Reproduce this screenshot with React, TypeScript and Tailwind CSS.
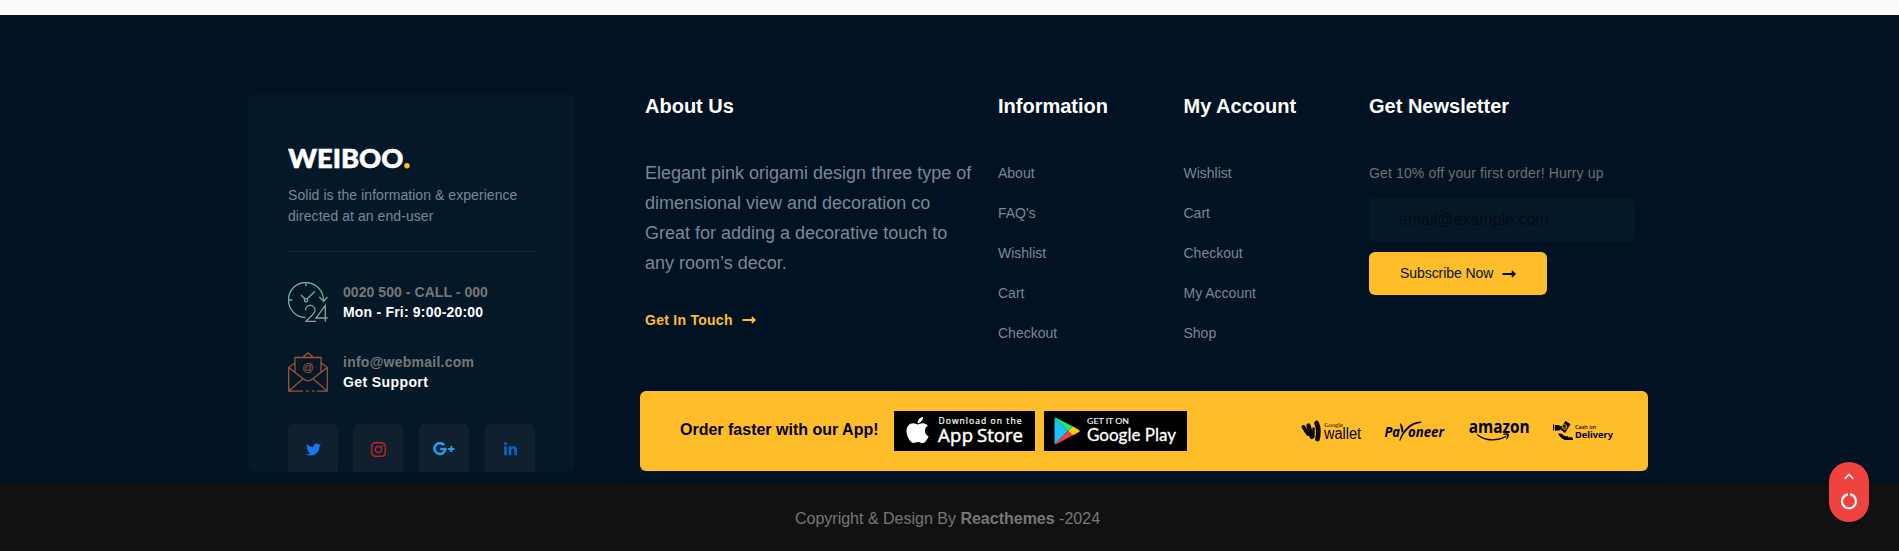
import React from "react";
import { FaTwitter, FaInstagram, FaLinkedinIn, FaApple } from "react-icons/fa";

const information = ["About", "FAQ's", "Wishlist", "Cart", "Checkout"];
const account = ["Wishlist", "Cart", "Checkout", "My Account", "Shop"];

function Arrow() {
  return (
    <svg width="14" height="8" viewBox="0 0 14 8" fill="currentColor" aria-hidden="true">
      <path d="M1 3h8.700V1.200c0-.7.6-.9 1-.5l2.900 2.800c.3.3.3.7 0 1l-2.900 2.800c-.4.4-1 .2-1-.5V5H1C.5 5 .3 4.800.3 4.500V3.500C.3 3.200.500 3 1 3z" />
    </svg>
  );
}

function Brand() {
  return (
    <svg width="124" height="26" viewBox="0 0 124 26" className="block overflow-visible" aria-label="WEIBOO.">
      <text x="0.300" y="22.800" textLength="115" lengthAdjust="spacingAndGlyphs" fill="#fff" stroke="#fff" strokeWidth=".6" fontFamily="Lato, sans-serif" fontWeight="900" fontSize="26.500">WEIBOO</text>
      <circle cx="119" cy="20.700" r="2.700" fill="#ffbe29" />
    </svg>
  );
}

function ClockIcon() {
  return (
    <svg width="40" height="40" viewBox="0 0 40 40" fill="none" stroke="#77ac9c" strokeWidth="1.300" className="shrink-0">
      <path d="M17.500 35.500A17.500 17.500 0 1 1 35.400 18.500" />
      <path d="M31.300 15l4.200 4.200 4-4.200M18 .8v3.500M.8 18h3.500M13 13l4 4M19.300 16.800l7.700-7.600" />
      <circle cx="18" cy="18.300" r="1.600" />
      <path d="M17.500 28.300c0-6.500 9.500-6.500 9.500 0 0 4-6 7-9 11h10M39.800 36H28l9.300-12.600v16.300" />
    </svg>
  );
}

function MailIcon() {
  return (
    <svg width="40" height="40" viewBox="0 0 40 40" fill="none" stroke="#9b5236" strokeWidth="1.300" className="shrink-0">
      <path d="M7 20.300V5.500h26v14.800M14.500 5.500L20 .9l5.500 4.600M7 10.800L.7 15.500v23.700H15M33 10.800l6.300 4.700v23.700H29M18 39.200h2.700M24 39.200h2.700M.7 15.500l14.800 11.600c3 2.300 6 2.300 9 0l14.800-11.600M.9 39l14-12.300M39.100 39l-14-12.300" />
      <text x="20" y="18.800" textAnchor="middle" fontSize="11.500" fontFamily="Liberation Sans, sans-serif" fill="#9b5236" strokeWidth=".15">@</text>
    </svg>
  );
}

function GooglePlusIcon() {
  return (
    <svg width="22" height="14" viewBox="0 0 22 14" fill="none" stroke="#1da1f2" strokeWidth="2.600">
      <path d="M11.100 3.100A5.400 5.400 0 1 0 12.300 7H7.200" />
      <path d="M15.200 7h6.200M18.300 3.900v6.200" strokeWidth="2" />
    </svg>
  );
}

function AppStoreBadge() {
  return (
    <a href="#" className="flex h-10 w-[141px] bg-black pl-3 text-white">
      <FaApple className="mt-1 h-[30px] w-[23px] shrink-0" />
      <svg width="102" height="40" viewBox="0 0 102 40" fill="#fff" stroke="#fff" fontFamily="Open Sans, sans-serif">
        <text x="9.500" y="12.800" fontSize="8.500" textLength="83" strokeWidth=".2">Download on the</text>
        <text x="9" y="31.300" fontSize="18.500" textLength="35" strokeWidth=".5">App</text>
        <text x="48" y="31.300" fontSize="18.500" textLength="46" strokeWidth=".5">Store</text>
      </svg>
    </a>
  );
}

function GooglePlayBadge() {
  return (
    <a href="#" className="block h-10 w-[143px] bg-black">
      <svg width="143" height="40" viewBox="0 0 143 40">
        <path d="M10.500 7v26L24 20z" fill="#16c5f5" />
        <path d="M10.500 7L24 20l5-4.600L12 6.800z" fill="#20e878" />
        <path d="M10.500 33L24 20l5 4.300L12 33.200z" fill="#f53d4c" />
        <path d="M24 20l5-4.600 6 3.500c1 .6 1 1.500 0 2.100l-6 3.300z" fill="#ffd000" />
        <g fill="#fff" stroke="#fff" fontFamily="Lato, sans-serif" fontWeight="400">
          <text x="43" y="12.800" fontSize="8" textLength="42" lengthAdjust="spacingAndGlyphs" strokeWidth=".1">GET IT ON</text>
          <text x="43" y="30" fontSize="17" textLength="89" lengthAdjust="spacingAndGlyphs" strokeWidth=".3">Google Play</text>
        </g>
      </svg>
    </a>
  );
}

function GoogleWallet() {
  return (
    <svg width="60" height="22" viewBox="0 0 60 22" className="overflow-visible">
      <g stroke="#0b0a08" strokeLinecap="round" fill="none">
        <path d="M2.500 7l4.500 7" strokeWidth="4" />
        <path d="M7.500 5.500l3.300 11.500" strokeWidth="4.400" />
        <path d="M15.500 3c2.300 4 2.300 11.500 1 16" strokeWidth="4.800" />
        <path d="M12.500 8.500v8" strokeWidth="2.500" />
      </g>
      <text x="23.300" y="7" fontFamily="Liberation Serif, serif" fontSize="7" textLength="18.500" lengthAdjust="spacingAndGlyphs">Google</text>
      <text x="23" y="19.300" fontFamily="Liberation Sans, sans-serif" fontSize="16" textLength="37" lengthAdjust="spacingAndGlyphs">wallet</text>
    </svg>
  );
}

function Payoneer() {
  return (
    <svg width="61" height="22" viewBox="0 0 61 22" className="overflow-visible">
      <g fontFamily="Open Sans, sans-serif" fontWeight="700" fontStyle="italic" fontSize="13.500">
        <text x="0.500" y="16.500" textLength="15.500" lengthAdjust="spacingAndGlyphs">Pa</text>
        <text x="24" y="16.500" textLength="36" lengthAdjust="spacingAndGlyphs">oneer</text>
      </g>
      <path d="M15.300 20.500C18 11 25 2 37 1.500c.8.400.3 1.300-.5 1.600C27 4 20.500 11.500 16.300 20.700z" />
      <path d="M16 3c2.500 1.500 3.300 4.500 3.300 8.500l-1.600 1.300C17.500 9 16 6.500 16 3z" />
    </svg>
  );
}

function Amazon() {
  return (
    <svg width="62" height="22" viewBox="0 0 62 22" className="overflow-visible">
      <text x="0.700" y="13.200" fontFamily="Open Sans, sans-serif" fontWeight="700" fontSize="17" textLength="61" lengthAdjust="spacingAndGlyphs">amazon</text>
      <path d="M9 14c9 6.500 20 6.500 29 1.800l.5.900C29 22.300 16 22 8.500 14.500z" />
      <path d="M35 14.400c2-1.500 5-1.300 5.800-.5.400 1.500-.500 4.500-2.200 5.700l-.5-.3c.5-1.500 1.200-3 .8-4-.7-.6-2.200-.5-3.900-.4z" />
    </svg>
  );
}

function CashOnDelivery() {
  return (
    <svg width="61" height="22" viewBox="0 0 61 22" className="overflow-visible">
      <path d="M0 4.500h1.200v6H0zM2 5h3.500L8 6.500l3-3L12.500.8l5 3.500-2 3-1.500 2.700-2 3-4.500-3.500L6 10.500H2z" />
      <circle cx="11.500" cy="7" r="2.400" fill="none" stroke="#ffbe29" strokeWidth=".8" />
      <path d="M9.800 7l1.700 1.300 2-2.500" fill="none" stroke="#ffbe29" strokeWidth=".7" />
      <path d="M5 13.500l3.500.3 3.500 2.400 2.800.1c.7.4.5 1.200-.2 1.300l3.200-.5 2.200 1v2h-5.800c-3.800-.2-6.700-1.600-9.200-6.600z" />
      <g fontFamily="Noto Sans, sans-serif">
        <text x="22" y="8.500" fontSize="5.500" textLength="21" lengthAdjust="spacingAndGlyphs" fontWeight="500">Cash on</text>
        <text x="22" y="17.700" fontSize="9" textLength="38" lengthAdjust="spacingAndGlyphs" fontWeight="700">Delivery</text>
      </g>
    </svg>
  );
}

function LinkColumn({ title, links }: { title: string; links: string[] }) {
  return (
    <div className="w-[185.500px] shrink-0">
      <h3 className="-mt-px text-[20px] leading-6 font-bold text-white">{title}</h3>
      <ul className="mt-[43px]">
        {links.map((link) => (
          <li key={link} className="h-10 text-[14px] leading-6 text-[#7a8895]">
            <a href="#">{link}</a>
          </li>
        ))}
      </ul>
    </div>
  );
}

const tile = "flex h-[50px] w-[50px] items-center justify-center rounded-[5px] bg-[#10202f]";

export default function App() {
  return (
    <div className="relative h-[551px] overflow-hidden bg-[#011222] font-['Liberation_Sans',Arial,sans-serif]">
      <div className="h-[15px] bg-[#fafafa]" />
      <footer>
        <div className="flex h-[469px] pt-20 pl-[248px]">
          <aside className="h-[377px] w-[327px] shrink-0 overflow-hidden rounded-[6px] bg-[#051828] px-10 pt-[50px]">
            <Brand />
            <p className="mt-[14px] text-[14px] leading-[21px] tracking-[0.06px] text-[#7a8895]">
              Solid is the information &amp; experience
              <br />
              directed at an end-user
            </p>
            <div className="mt-6 border-t border-[#142635]" />
            <div className="mt-[30px] flex gap-[15px]">
              <ClockIcon />
              <div className="text-[14px] leading-5 font-bold">
                <p className="tracking-[0.06px] text-[#777]">0020 500 - CALL - 000</p>
                <p className="tracking-[0.2px] text-white">Mon - Fri: 9:00-20:00</p>
              </div>
            </div>
            <div className="mt-[30px] flex gap-[15px]">
              <MailIcon />
              <div className="text-[14px] leading-5 font-bold">
                <p className="tracking-[0.25px] text-[#777]">info@webmail.com</p>
                <p className="tracking-[0.4px] text-white">Get Support</p>
              </div>
            </div>
            <div className="mt-8 grid grid-cols-[65px_66px_66px_50px]">
              <a href="#" className={tile}><FaTwitter size={15} color="#1877f2" /></a>
              <a href="#" className={tile}><FaInstagram size={17} color="#c8232c" /></a>
              <a href="#" className={tile}><GooglePlusIcon /></a>
              <a href="#" className={tile}><FaLinkedinIn size={15} color="#0a66c2" /></a>
            </div>
          </aside>

          <div className="ml-[65px] w-[1008px] shrink-0">
            <div className="flex h-[296px] pl-[5px]">
              <div className="w-[353px] shrink-0">
                <h3 className="-mt-px text-[20px] leading-6 font-bold text-white">About Us</h3>
                <p className="mt-10 text-[18px] leading-[30px] whitespace-nowrap text-[#7a8895]">
                  Elegant pink origami design three type of
                  <br />
                  dimensional view and decoration co
                  <br />
                  Great for adding a decorative touch to
                  <br />
                  any room’s decor.
                </p>
                <a href="#" className="mt-8 flex items-center gap-[9px] text-[14px] leading-5 font-bold tracking-[0.27px] text-[#ffbe29]">
                  Get In Touch <Arrow />
                </a>
              </div>
              <LinkColumn title="Information" links={information} />
              <LinkColumn title="My Account" links={account} />
              <div className="w-[266px] shrink-0">
                <h3 className="-mt-px text-[20px] leading-6 font-bold text-white">Get Newsletter</h3>
                <p className="mt-[43px] text-[14px] leading-6 tracking-[0.14px] text-[#707070]">Get 10% off your first order! Hurry up</p>
                <input
                  type="email"
                  placeholder="email@example.com"
                  className="mt-[13px] block h-11 w-[266px] rounded-[5px] bg-[#051828] px-[30px] text-[16px] outline-none placeholder:text-[#020a11]"
                />
                <button className="mt-[10px] flex h-[43px] w-[178px] items-center gap-[9px] rounded-[6px] bg-[#ffbe29] pl-[31px] text-[14px] tracking-[-0.06px] text-[#011222]">
                  Subscribe Now <Arrow />
                </button>
              </div>
            </div>

            <div className="flex h-20 items-center rounded-[6px] bg-[#ffbe29] pl-10">
              <p className="w-[214px] pb-[2px] text-[16px] font-bold text-black">Order faster with our App!</p>
              <AppStoreBadge />
              <div className="w-[9px]" />
              <GooglePlayBadge />
              <div className="ml-[114px] flex items-center gap-[23px]">
                <GoogleWallet />
                <Payoneer />
                <Amazon />
                <CashOnDelivery />
              </div>
            </div>
          </div>
        </div>
        <div className="flex h-[67px] justify-center bg-[#111] pt-[23px] pr-1 text-[16px] leading-6 text-[#777]">
          <p>
            Copyright &amp; Design By <strong>Reacthemes</strong> -2024
          </p>
        </div>
      </footer>
      <button className="absolute top-[462px] right-[30px] flex h-[60px] w-10 flex-col items-center rounded-[20px] bg-[#f0423f]">
        <svg width="20" height="50" viewBox="0 0 20 50" fill="none" stroke="#fff">
          <path d="M5.700 16.800l4.300-4.300 4.300 4.300" strokeWidth="1.600" />
          <path d="M11.200 32.400a7 7 0 1 1-2.400 0" strokeWidth="2.100" />
        </svg>
      </button>
    </div>
  );
}
